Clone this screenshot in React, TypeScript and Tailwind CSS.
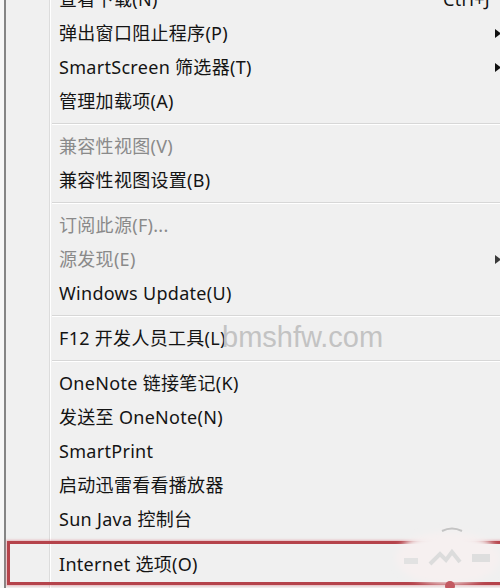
import React from "react";

type Item =
  | { kind: "item"; label: string; disabled?: boolean; sub?: boolean; shortcut?: string }
  | { kind: "sep" };

const items: Item[] = [
  { kind: "item", label: "查看下载(N)", shortcut: "Ctrl+J" },
  { kind: "item", label: "弹出窗口阻止程序(P)", sub: true },
  { kind: "item", label: "SmartScreen 筛选器(T)", sub: true },
  { kind: "item", label: "管理加载项(A)" },
  { kind: "sep" },
  { kind: "item", label: "兼容性视图(V)", disabled: true },
  { kind: "item", label: "兼容性视图设置(B)" },
  { kind: "sep" },
  { kind: "item", label: "订阅此源(F)...", disabled: true },
  { kind: "item", label: "源发现(E)", disabled: true, sub: true },
  { kind: "item", label: "Windows Update(U)" },
  { kind: "sep" },
  { kind: "item", label: "F12 开发人员工具(L)" },
  { kind: "sep" },
  { kind: "item", label: "OneNote 链接笔记(K)" },
  { kind: "item", label: "发送至 OneNote(N)" },
  { kind: "item", label: "SmartPrint" },
  { kind: "item", label: "启动迅雷看看播放器" },
  { kind: "item", label: "Sun Java 控制台" },
  { kind: "sep" },
  { kind: "item", label: "Internet 选项(O)" },
];

function Arrow({ muted }: { muted?: boolean }) {
  return (
    <svg width="6" height="9" viewBox="0 0 6 9" className="shrink-0">
      <path d="M0 0 L6 4.5 L0 9 Z" fill={muted ? "#3a3a3a" : "#111111"} />
    </svg>
  );
}

export default function App() {
  return (
    <div
      className="relative w-[500px] h-[588px] overflow-hidden bg-[#f7f7f7]"
      style={{ fontFamily: '"Noto Sans", "Noto Sans CJK SC", sans-serif' }}
    >
      <div className="ml-[4px] flex h-full border-l-2 border-[#858585] bg-[#f0f0f0]">
        {/* icon gutter */}
        <div className="w-[44px] shrink-0 border-r border-[#dcdcdc]" />
        {/* menu entries */}
        <div className="flex-1 border-l border-white">
          <div className="-mt-[18px] flex flex-col">
            {items.map((it, i) =>
              it.kind === "sep" ? (
                <div key={i} className="h-[11px] pl-[1px] pt-[5px]">
                  <div className="h-0 border-t border-b border-t-[#d7d7d7] border-b-white" />
                </div>
              ) : (
                <div
                  key={i}
                  className={
                    "flex h-[34px] items-center pl-[8px] text-[18px] leading-none tracking-[0.3px] " +
                    (it.disabled ? "text-[#8a8a8a]" : "text-[#141414]")
                  }
                >
                  <span className="whitespace-nowrap">{it.label}</span>
                  {it.shortcut && (
                    <span className="ml-auto mr-[10px] whitespace-nowrap">{it.shortcut}</span>
                  )}
                  {it.sub && (
                    <span className="ml-auto mr-[-1px]">
                      <Arrow muted={it.disabled} />
                    </span>
                  )}
                </div>
              )
            )}
          </div>
        </div>
      </div>

      {/* site watermark */}
      <div
        className="pointer-events-none absolute left-[222px] top-[323px] text-[29px] leading-none text-[#c3c3c3]"
        style={{ fontFamily: '"Liberation Sans", Arial, sans-serif' }}
      >
        bmshfw.com
      </div>

      {/* highlight frame round the last entry */}
      <div className="pointer-events-none absolute left-[7px] top-[541px] h-[44px] w-[500px] border-[3px] border-[#b5434b] shadow-[0_0_2px_1px_rgba(220,120,130,0.5)]" />

      {/* faint stamp in the corner */}
      <svg
        className="pointer-events-none absolute left-[390px] top-[524px]"
        width="110"
        height="64"
        viewBox="0 0 110 64"
      >
        <defs>
          <filter id="soft" x="-30%" y="-30%" width="160%" height="160%">
            <feGaussianBlur stdDeviation="3" />
          </filter>
        </defs>
        <ellipse cx="58" cy="34" rx="52" ry="26" fill="#f6f0f0" filter="url(#soft)" />
        <path d="M52 7 Q62 2 72 7" stroke="#c4c4c4" strokeWidth="2" fill="none" />
        <path d="M40 40 L50 30 L56 36 L62 28 L70 38" stroke="#dcdcdc" strokeWidth="4" fill="none" />
        <rect x="14" y="34" width="14" height="6" fill="#e2e2e2" />
        <rect x="82" y="30" width="18" height="8" fill="#dedede" />
        <circle cx="60" cy="62" r="5" fill="#c35a62" />
      </svg>
    </div>
  );
}
